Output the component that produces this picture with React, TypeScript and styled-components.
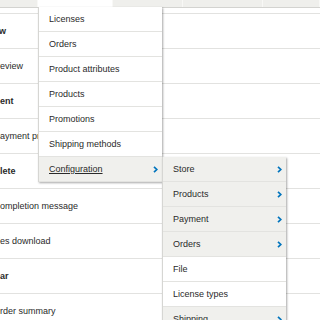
import React from 'react';
import styled, { createGlobalStyle } from 'styled-components';

const Global = createGlobalStyle`
  html, body { margin: 0; padding: 0; background: #fff; }
  body { font-family: "Liberation Sans", Arial, sans-serif; }
  * { box-sizing: border-box; }
`;

const Page = styled.div`
  position: relative;
  width: 320px;
  height: 320px;
  overflow: hidden;
  background: #fff;
`;

const TabBar = styled.div`
  display: flex;
  height: 8px;
  background: #efefec;
  border-bottom: 1px solid #d3d3d0;
`;

const Tab = styled.div<{ $w: number; $active?: boolean }>`
  flex: 0 0 ${p => p.$w}px;
  background: ${p => (p.$active ? '#fff' : 'transparent')};
  border-right: 1px solid #f8f8f6;
`;

const Table = styled.div`
  display: flex;
  flex-direction: column;
`;

const TopGap = styled.div`
  height: 6px;
  border-bottom: 1px solid #e2e2e0;
`;

const Row = styled.div<{ $bold?: boolean }>`
  height: 35px;
  border-bottom: 1px solid #e2e2e0;
  display: flex;
  align-items: center;
  font-size: 9px;
  font-weight: ${p => (p.$bold ? 700 : 400)};
  color: #2a2a2a;
  white-space: nowrap;
  overflow: hidden;
`;

const Label = styled.span<{ $shift: number }>`
  margin-left: ${p => p.$shift}px;
`;

const Menu = styled.ul<{ $left: number; $top: number }>`
  position: absolute;
  left: ${p => p.$left}px;
  top: ${p => p.$top}px;
  width: 124px;
  margin: 0;
  padding: 0;
  list-style: none;
  background: #fff;
  border-left: 1px solid #d6d6d3;
  box-shadow: 1px 1px 2px rgba(0, 0, 0, 0.35);
`;

const Item = styled.li<{ $parent?: boolean }>`
  height: 25px;
  border-bottom: 1px solid #e3e3e0;
  display: flex;
  align-items: center;
  justify-content: space-between;
  padding: 0 4px 0 10px;
  background: ${p => (p.$parent ? '#f0f0ed' : '#fff')};
  font-size: 9px;
  color: #2a2a2a;
  white-space: nowrap;
`;

const ItemText = styled.span<{ $hover?: boolean }>`
  text-decoration: ${p => (p.$hover ? 'underline' : 'none')};
`;

const Chevron = () => (
  <svg width="5" height="7" viewBox="0 0 5 7">
    <path d="M1 0.8 L3.8 3.5 L1 6.2" fill="none" stroke="#0074bd" strokeWidth="1.7" />
  </svg>
);

const rows: { text: string; bold?: boolean; shift: number }[] = [
  { text: 'Review', bold: true, shift: -25 },
  { text: 'Checkout review', shift: -43.5 },
  { text: 'Payment', bold: true, shift: -24 },
  { text: 'Checkout payment processing', shift: -45.5 },
  { text: 'Complete', bold: true, shift: -25.5 },
  { text: 'Checkout completion message', shift: -45 },
  { text: 'Files download', shift: -9.5 },
  { text: 'Sidebar', bold: true, shift: -24.5 },
  { text: 'Order summary', shift: -7 },
];

const menu1 = [
  'Licenses',
  'Orders',
  'Product attributes',
  'Products',
  'Promotions',
  'Shipping methods',
];

const menu2: { text: string; parent?: boolean }[] = [
  { text: 'Store', parent: true },
  { text: 'Products', parent: true },
  { text: 'Payment', parent: true },
  { text: 'Orders', parent: true },
  { text: 'File' },
  { text: 'License types' },
  { text: 'Shipping', parent: true },
];

export default function App() {
  return (
    <Page>
      <Global />
      <TabBar>
        <Tab $w={38} />
        <Tab $w={75} $active />
        <Tab $w={70} />
        <Tab $w={80} />
        <Tab $w={57} />
      </TabBar>
      <Table>
        <TopGap />
        {rows.map(r => (
          <Row key={r.text} $bold={r.bold}>
            <Label $shift={r.shift}>{r.text}</Label>
          </Row>
        ))}
      </Table>
      <Menu $left={38} $top={7}>
        {menu1.map(t => (
          <Item key={t}>
            <ItemText>{t}</ItemText>
          </Item>
        ))}
        <Item $parent>
          <ItemText $hover>Configuration</ItemText>
          <Chevron />
        </Item>
      </Menu>
      <Menu $left={162} $top={157}>
        {menu2.map(m => (
          <Item key={m.text} $parent={m.parent}>
            <ItemText>{m.text}</ItemText>
            {m.parent && <Chevron />}
          </Item>
        ))}
      </Menu>
    </Page>
  );
}
